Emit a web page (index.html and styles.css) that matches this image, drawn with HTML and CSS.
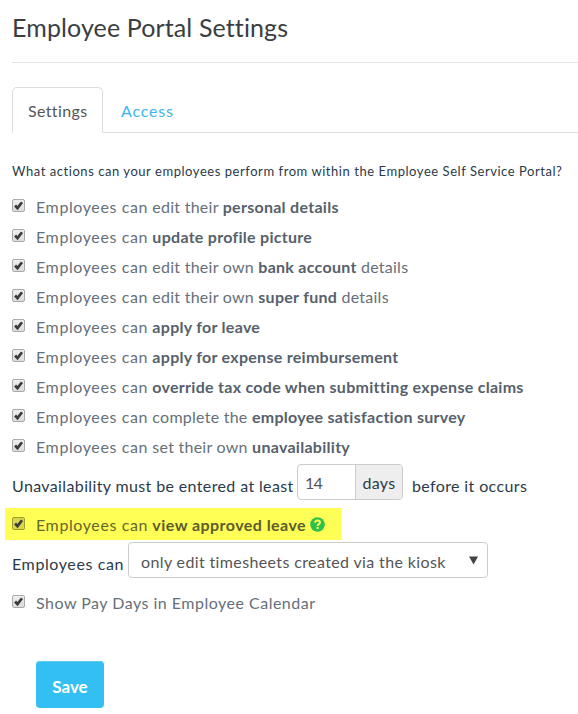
FILE: index.html
```html
<!DOCTYPE html>
<html lang="en">
<head>
  <meta charset="UTF-8" />
  <title>Employee Portal Settings</title>
  <link rel="stylesheet" href="styles.css">
</head>
<body>

  <svg class="icon-defs" width="0" height="0">
    <symbol id="tick" viewBox="0 0 11 11">
      <path d="M2.1 5.5 L4.5 8.1 L9 2.2" fill="none" stroke="#3c3c3c" stroke-width="2.7" />
    </symbol>
  </svg>

  <div class="container">
    <h1>Employee Portal Settings</h1>

    <ul class="nav-tabs">
      <li class="active"><a>Settings</a></li>
      <li><a>Access</a></li>
    </ul>

    <p class="intro">What actions can your employees perform from within the Employee Self Service Portal?</p>

    <form onsubmit="return false;">
      <label class="checkbox"><svg class="box"><use href="#tick" /></svg><span><span class="who">Employees can</span> edit their <b>personal details</b></span></label>
      <label class="checkbox"><svg class="box"><use href="#tick" /></svg><span><span class="who">Employees can</span> <b>update profile picture</b></span></label>
      <label class="checkbox"><svg class="box"><use href="#tick" /></svg><span><span class="who">Employees can</span> edit their own <b>bank account</b> details</span></label>
      <label class="checkbox"><svg class="box"><use href="#tick" /></svg><span><span class="who">Employees can</span> edit their own <b>super fund</b> details</span></label>
      <label class="checkbox"><svg class="box"><use href="#tick" /></svg><span><span class="who">Employees can</span> <b>apply for leave</b></span></label>
      <label class="checkbox"><svg class="box"><use href="#tick" /></svg><span><span class="who">Employees can</span> <b>apply for expense reimbursement</b></span></label>
      <label class="checkbox"><svg class="box"><use href="#tick" /></svg><span><span class="who">Employees can</span> <b>override tax code when submitting expense claims</b></span></label>
      <label class="checkbox"><svg class="box"><use href="#tick" /></svg><span><span class="who">Employees can</span> complete the <b>employee satisfaction survey</b></span></label>
      <label class="checkbox"><svg class="box"><use href="#tick" /></svg><span><span class="who">Employees can</span> set their own <b>unavailability</b></span></label>

      <div class="inline-row notice">
        <span class="lead">Unavailability must be entered at least</span>
        <span class="input-append"><span class="value">14</span><span class="add-on">days</span></span>
        <span>before it occurs</span>
      </div>

      <label class="checkbox highlight"><svg class="box"><use href="#tick" /></svg><span><span class="who">Employees can</span> <b>view approved leave</b></span>
        <svg class="help" viewBox="0 0 15 15">
          <circle cx="7.5" cy="7.5" r="7.3" fill="#2fc04c" />
          <path d="M5 5.6 C5.3 4 6.3 3.5 7.5 3.5 C9 3.5 10 4.3 10 5.5 C10 7.2 7.6 7.1 7.6 9" fill="none" stroke="#ffff55" stroke-width="1.9" />
          <rect x="6.6" y="10" width="2" height="2" fill="#ffff55" />
        </svg>
      </label>

      <div class="inline-row kiosk">
        <span class="lead">Employees can</span>
        <span class="select">only edit timesheets created via the kiosk<svg class="caret" viewBox="0 0 9 9"><path d="M0 0.5 H9 L4.5 8.5 Z" fill="#444" /></svg></span>
      </div>

      <label class="checkbox pay-days"><svg class="box"><use href="#tick" /></svg><span>Show Pay Days in Employee Calendar</span></label>

      <button class="save">Save</button>
    </form>
  </div>

</body>
</html>
```
FILE: styles.css
```css
* {
  box-sizing: border-box;
}

body {
  margin: 0;
  background: #fff;
  color: #2b3a4a;
  font-family: Lato, "Liberation Sans", sans-serif;
  font-size: 16px;
  letter-spacing: 0.37px;
  overflow: hidden;
}

.icon-defs {
  position: absolute;
}

.container {
  padding-left: 12px;
}

h1 {
  margin: 0;
  height: 63px;
  line-height: 55px;
  border-bottom: 1px solid #e3e3e3;
  color: #3a3e43;
  font-size: 25px;
  font-weight: 400;
  letter-spacing: 0.12px;
  white-space: nowrap;
}

.nav-tabs {
  display: flex;
  height: 46px;
  margin: 24px 0 0;
  padding: 0;
  list-style: none;
  border-bottom: 1px solid #ddd;
}

.nav-tabs li {
  height: 46px;
  padding: 0 16px;
  line-height: 46px;
  border: 1px solid transparent;
}

.nav-tabs .active {
  width: 91px;
  padding: 0 15px;
  color: #555;
  background: #fff;
  border-color: #ddd;
  border-bottom-color: #fff;
  border-radius: 5px 5px 0 0;
}

.nav-tabs a {
  white-space: nowrap;
}

.nav-tabs li:last-child {
  padding-left: 17px;
  color: #3db5ee;
  letter-spacing: 0.8px;
}

.intro {
  margin: 28px 0 12px;
  line-height: 20px;
  font-size: 13px;
  letter-spacing: 0.55px;
  white-space: nowrap;
}

.checkbox {
  display: flex;
  height: 30px;
  line-height: 28px;
  color: #66707a;
  letter-spacing: 0.25px;
  white-space: nowrap;
}

.who {
  letter-spacing: 0.6px;
}

.checkbox b {
  color: #56616b;
  font-weight: 700;
  letter-spacing: 0.28px;
}

.box {
  width: 13px;
  height: 13px;
  margin: 6px 11px 0 0;
  border: 1px solid #aaa;
  border-radius: 2px;
  background: linear-gradient(#efefef, #dcdcdc);
}

.inline-row {
  display: flex;
  height: 36px;
  white-space: nowrap;
}

.inline-row > span {
  line-height: 44px;
}

.notice {
  margin-top: 1px;
}

.notice .lead {
  width: 285px;
}

.inline-row .input-append {
  display: flex;
  width: 106px;
  height: 36px;
  margin-right: 9px;
  line-height: 36px;
  border: 1px solid #ccc;
  border-radius: 4px;
  overflow: hidden;
}

.value {
  width: 58px;
  padding-left: 7px;
  color: #555;
  letter-spacing: -0.8px;
  border-right: 1px solid #ccc;
}

.add-on {
  flex: 1;
  background: #eee;
  text-align: center;
}

.highlight {
  width: 336px;
  height: 32px;
  margin: 8px 0 2px -7px;
  padding-left: 7px;
  line-height: 34px;
  background: #ffff55;
  color: #66662e;
}

.highlight b {
  color: #5c5c2c;
  letter-spacing: 0.45px;
}

.highlight .box {
  margin-top: 9px;
  border-color: #9d9d30;
  background: #d8d84e;
}

.help {
  width: 15px;
  height: 15px;
  margin: 9px 0 0 4px;
}

.kiosk .lead {
  width: 116px;
  letter-spacing: 0.6px;
}

.inline-row .select {
  display: flex;
  width: 360px;
  height: 36px;
  padding-left: 12px;
  line-height: 38px;
  color: #555;
  border: 1px solid #ccc;
  border-radius: 4px;
}

.caret {
  width: 9px;
  height: 9px;
  margin: 13px 9px 0 auto;
}

.pay-days {
  margin-top: 11px;
  letter-spacing: 0.49px;
}

.save {
  display: block;
  width: 68px;
  height: 47px;
  margin: 42px 0 0 24px;
  padding: 3px 0 0;
  border: 0;
  border-radius: 4px;
  background: #33bff2;
  box-shadow: inset 0 1px 0 #5bcbf4;
  color: #fff;
  font: 700 17px Lato, "Liberation Sans", sans-serif;
}
```
